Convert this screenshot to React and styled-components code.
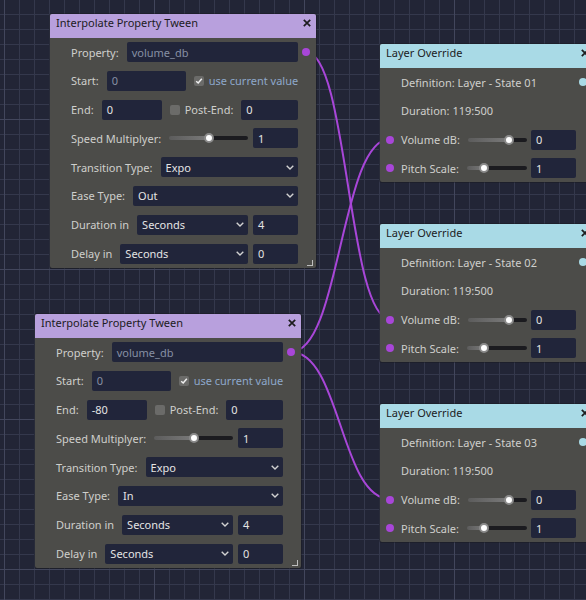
import React from "react";
import styled, { createGlobalStyle } from "styled-components";

const GlobalStyle = createGlobalStyle`
  html, body {
    margin: 0;
    padding: 0;
    background: #222536;
  }
  body {
    font-family: "Noto Sans", "DejaVu Sans", sans-serif;
    font-size: 11px;
  }
`;

const Canvas = styled.div`
  position: relative;
  width: 586px;
  height: 600px;
  overflow: hidden;
  background-color: #222536;
  background-image:
    linear-gradient(to right, #42465c 1px, transparent 1px),
    linear-gradient(to bottom, #42465c 1px, transparent 1px),
    linear-gradient(to right, #34384c 1px, transparent 1px),
    linear-gradient(to bottom, #34384c 1px, transparent 1px);
  background-size: 150px 150px, 150px 150px, 15px 15px, 15px 15px;
  background-position: 4px 0, 0 119px, 4px 0, 0 14px;
`;

const Wires = styled.svg`
  position: absolute;
  left: 0;
  top: 0;
  width: 586px;
  height: 600px;
  pointer-events: none;
`;

const GraphNode = styled.div`
  position: absolute;
  left: ${(p) => p.$x}px;
  top: ${(p) => p.$y}px;
  width: ${(p) => p.$w}px;
  background: #4c4c49;
  border-radius: 2px;
  box-shadow: 0 0 0 1px rgba(20, 20, 24, 0.35);
`;

const TitleBar = styled.div`
  box-sizing: border-box;
  height: 24px;
  padding: 1px 5px 0 6px;
  display: flex;
  justify-content: space-between;
  align-items: flex-start;
  background: ${(p) => p.$color};
  border-radius: 2px 2px 0 0;
  color: #1c1c1e;
  line-height: 15px;
`;

const Close = styled.svg`
  width: 8px;
  height: 8px;
  margin-top: 4px;
  flex: none;
`;

const Body = styled.div`
  position: relative;
  padding: 4px 18px 4px 21px;
  display: flex;
  flex-direction: column;
  gap: 8.8px;
`;

const Row = styled.div`
  position: relative;
  height: 20px;
  display: flex;
  align-items: center;
  gap: 8px;
`;

const Pair = styled.div`
  flex: 1;
  display: flex;
  align-items: center;
  gap: ${(p) => p.$gap || 5}px;
`;

const Label = styled.span`
  flex: none;
  white-space: nowrap;
  color: #cfcfcc;
`;

const Field = styled.div`
  box-sizing: border-box;
  height: 20px;
  padding: 0 5px;
  display: flex;
  align-items: center;
  ${(p) => (p.$w ? `width: ${p.$w}px; flex: none;` : "flex: 1;")}
  background: #21253a;
  border-radius: 2px;
  color: ${(p) => (p.$dim ? "#8790a4" : "#e4e4e4")};
  white-space: nowrap;
`;

const Select = styled(Field)`
  justify-content: space-between;
  padding-right: 4px;
`;

const Chevron = styled.svg`
  width: 8px;
  height: 5px;
  flex: none;
`;

const CheckGroup = styled.div`
  flex: none;
  display: flex;
  align-items: center;
  gap: 5px;
`;

const Box = styled.span`
  width: 10px;
  height: 10px;
  border-radius: 2px;
  background: #6b6b69;
  display: flex;
  align-items: center;
  justify-content: center;
`;

const CheckText = styled.span`
  white-space: nowrap;
  color: ${(p) => (p.$accent ? "#8ea8cb" : "#cfcfcc")};
`;

const Track = styled.div`
  position: relative;
  flex: 1;
  height: 4px;
  border-radius: 2px;
  background: linear-gradient(
    to right,
    #5c5c5c 0%,
    #7a7a7a ${(p) => p.$pos}%,
    #1b1b1f ${(p) => p.$pos}%,
    #1b1b1f 100%
  );
`;

const Knob = styled.span`
  position: absolute;
  top: 50%;
  left: ${(p) => p.$pos}%;
  width: 6px;
  height: 6px;
  margin: -5px 0 0 -5px;
  border-radius: 50%;
  background: #ffffff;
  border: 2px solid #8a8a8a;
`;

const Port = styled.span`
  position: absolute;
  top: 50%;
  ${(p) => p.$side}: ${(p) => p.$offset}px;
  width: 8px;
  height: 8px;
  margin-top: -4px;
  border-radius: 50%;
  background: ${(p) => p.$color};
`;

const Resize = styled.span`
  position: absolute;
  right: 3px;
  bottom: 2px;
  width: 5px;
  height: 5px;
  border-right: 1.5px solid #bdbdbd;
  border-bottom: 1.5px solid #bdbdbd;
`;

const PURPLE = "#a846d8";
const LAVENDER = "#b8a0dd";
const SKY = "#a9dae6";

function CloseIcon() {
  return (
    <Close viewBox="0 0 8 8">
      <path d="M0.8 0.8 L7.2 7.2 M7.2 0.8 L0.8 7.2" stroke="#1c1c1e" strokeWidth="1.7" />
    </Close>
  );
}

function Dropdown({ value }) {
  return (
    <Select>
      <span>{value}</span>
      <Chevron viewBox="0 0 8 5">
        <path d="M0.7 0.7 L4 4 L7.3 0.7" fill="none" stroke="#d2d2d2" strokeWidth="1.4" />
      </Chevron>
    </Select>
  );
}

function Check({ on }) {
  return (
    <Box>
      {on && (
        <svg width="8" height="8" viewBox="0 0 8 8">
          <path d="M1.2 4.2 L3.2 6 L6.8 1.8" fill="none" stroke="#f0f0f0" strokeWidth="1.5" />
        </svg>
      )}
    </Box>
  );
}

function Slider({ pos }) {
  return (
    <Track $pos={pos}>
      <Knob $pos={pos} />
    </Track>
  );
}

function TweenNode({ x, y, end, ease }) {
  return (
    <GraphNode $x={x} $y={y} $w={266}>
      <TitleBar $color={LAVENDER}>
        <span>Interpolate Property Tween</span>
        <CloseIcon />
      </TitleBar>
      <Body>
        <Row>
          <Label>Property:</Label>
          <Field $dim>volume_db</Field>
          <Port $side="right" $offset={-12} $color={PURPLE} />
        </Row>
        <Row>
          <Label>Start:</Label>
          <Field $w={79} $dim>0</Field>
          <CheckGroup>
            <Check on />
            <CheckText $accent>use current value</CheckText>
          </CheckGroup>
        </Row>
        <Row>
          <Label>End:</Label>
          <Field $w={60}>{end}</Field>
          <CheckGroup>
            <Check />
            <CheckText>Post-End:</CheckText>
          </CheckGroup>
          <Field>0</Field>
        </Row>
        <Row>
          <Label>Speed Multiplyer:</Label>
          <Pair>
            <Slider pos={50} />
            <Field $w={45}>1</Field>
          </Pair>
        </Row>
        <Row>
          <Label>Transition Type:</Label>
          <Dropdown value="Expo" />
        </Row>
        <Row>
          <Label>Ease Type:</Label>
          <Dropdown value={ease} />
        </Row>
        <Row>
          <Label>Duration in</Label>
          <Pair>
            <Dropdown value="Seconds" />
            <Field $w={45}>4</Field>
          </Pair>
        </Row>
        <Row>
          <Label>Delay in</Label>
          <Pair>
            <Dropdown value="Seconds" />
            <Field $w={45}>0</Field>
          </Pair>
        </Row>
        <Resize />
      </Body>
    </GraphNode>
  );
}

function LayerNode({ y, state }) {
  return (
    <GraphNode $x={380} $y={y} $w={214}>
      <TitleBar $color={SKY}>
        <span>Layer Override</span>
        <CloseIcon />
      </TitleBar>
      <Body>
        <Row>
          <Label>Definition: Layer - State {state}</Label>
          <Port $side="right" $offset={-11} $color={SKY} />
        </Row>
        <Row>
          <Label>Duration: 119:500</Label>
        </Row>
        <Row>
          <Port $side="left" $offset={-15} $color={PURPLE} />
          <Label>Volume dB:</Label>
          <Pair $gap={4}>
            <Slider pos={70} />
            <Field $w={45}>0</Field>
          </Pair>
        </Row>
        <Row>
          <Port $side="left" $offset={-15} $color={PURPLE} />
          <Label>Pitch Scale:</Label>
          <Pair $gap={4}>
            <Slider pos={29} />
            <Field $w={45}>1</Field>
          </Pair>
        </Row>
      </Body>
    </GraphNode>
  );
}

const wires = [
  { from: [306, 52], to: [390, 319] },
  { from: [291, 352], to: [390, 139] },
  { from: [291, 352], to: [390, 499] },
];

function wirePath([x1, y1], [x2, y2]) {
  const d = Math.abs(x2 - x1) * 0.5;
  return `M${x1} ${y1} C${x1 + d} ${y1} ${x2 - d} ${y2} ${x2} ${y2}`;
}

export default function App() {
  return (
    <>
      <GlobalStyle />
      <Canvas>
        <Wires viewBox="0 0 586 600">
          {wires.map((w, i) => (
            <path key={i} d={wirePath(w.from, w.to)} fill="none" stroke={PURPLE} strokeWidth="2" />
          ))}
        </Wires>
        <TweenNode x={50} y={14} end="0" ease="Out" />
        <TweenNode x={35} y={314} end="-80" ease="In" />
        <LayerNode y={44} state="01" />
        <LayerNode y={224} state="02" />
        <LayerNode y={404} state="03" />
      </Canvas>
    </>
  );
}
